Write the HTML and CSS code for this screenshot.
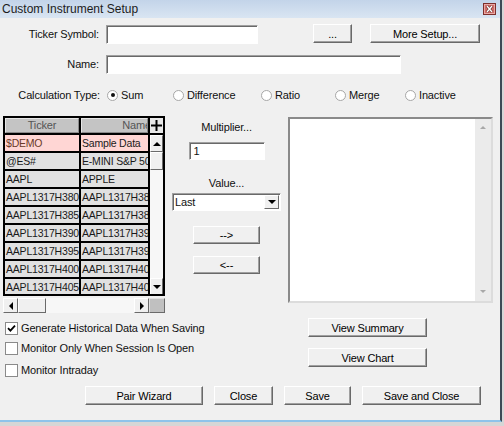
FILE: index.html
```html
<!DOCTYPE html>
<html lang="en">

<head>
    <meta charset="utf-8">
    <title>Custom Instrument Setup</title>
    <link rel="stylesheet" href="styles.css">
</head>

<body>
    <div class="dialog">
        <div class="titlebar">
            <span class="title">Custom Instrument Setup</span>
            <span class="close-x">
                <svg width="13" height="12" viewBox="0 0 13 12">
                    <rect x="0.5" y="0.5" width="12" height="11" fill="#cf6a66" stroke="#7d2f2c" />
                    <rect x="1.5" y="1.5" width="10" height="9" fill="none" stroke="#e9a9a5" />
                    <path d="M4 3 L9 9 M9 3 L4 9" stroke="#5a1e1c" stroke-width="2.6" />
                    <path d="M4 3 L9 9 M9 3 L4 9" stroke="#fff" stroke-width="1.4" />
                </svg>
            </span>
        </div>

        <div class="row row-ticker">
            <span class="lbl">Ticker Symbol:</span>
            <div class="field ticker-field"></div>
            <button class="btn btn-dots">...</button>
            <button class="btn btn-more">More Setup...</button>
        </div>

        <div class="row row-name">
            <span class="lbl">Name:</span>
            <div class="field name-field"></div>
        </div>

        <div class="row row-calc">
            <span class="lbl">Calculation Type:</span>
            <div class="radios">
                <span class="radio-item w-sum"><span class="radio on"></span>Sum</span>
                <span class="radio-item w-diff"><span class="radio"></span>Difference</span>
                <span class="radio-item w-ratio"><span class="radio"></span>Ratio</span>
                <span class="radio-item w-merge"><span class="radio"></span>Merge</span>
                <span class="radio-item"><span class="radio"></span>Inactive</span>
            </div>
        </div>

        <div class="main">
            <div class="leftcol">
                <div class="grid">
                    <div class="hcell">Ticker</div>
                    <div class="hcell hname"><span>Name</span></div>
                    <div class="hplus">
                        <svg width="11" height="11" viewBox="0 0 11 11">
                            <path d="M5.5 0 V11 M0 5.5 H11" stroke="#000" stroke-width="2" />
                        </svg>
                    </div>

                    <div class="vscroll">
                        <div class="sb-btn"><span class="tri tri-up"></span></div>
                        <div class="sb-thumb"></div>
                        <div class="sb-track"></div>
                        <div class="sb-btn"><span class="tri tri-down"></span></div>
                    </div>

                    <div class="cell demo demo-tick">$DEMO</div>
                    <div class="cell demo">Sample Data</div>
                    <div class="cell">@ES#</div>
                    <div class="cell">E-MINI S&amp;P 500</div>
                    <div class="cell">AAPL</div>
                    <div class="cell">APPLE</div>
                    <div class="cell">AAPL1317H380</div>
                    <div class="cell">AAPL1317H380</div>
                    <div class="cell">AAPL1317H385</div>
                    <div class="cell">AAPL1317H385</div>
                    <div class="cell">AAPL1317H390</div>
                    <div class="cell">AAPL1317H390</div>
                    <div class="cell">AAPL1317H395</div>
                    <div class="cell">AAPL1317H395</div>
                    <div class="cell">AAPL1317H400</div>
                    <div class="cell">AAPL1317H400</div>
                    <div class="cell">AAPL1317H405</div>
                    <div class="cell">AAPL1317H405</div>
                </div>

                <div class="hscroll">
                    <div class="sb-btn hbtn"><span class="tri tri-left"></span></div>
                    <div class="sb-thumb hthumb"></div>
                    <div class="sb-track"></div>
                    <div class="sb-btn hbtn"><span class="tri tri-right"></span></div>
                    <div class="corner"></div>
                </div>
            </div>

            <div class="midcol">
                <span class="mid-lbl lbl-mult">Multiplier...</span>
                <div class="field mult-field">1</div>
                <span class="mid-lbl lbl-value">Value...</span>
                <div class="field select">
                    <span class="select-text">Last</span>
                    <span class="select-btn"><span class="tri tri-down"></span></span>
                </div>
                <button class="btn btn-arrow btn-add">--&gt;</button>
                <button class="btn btn-arrow btn-remove">&lt;--</button>
            </div>

            <div class="field listbox">
                <div class="list-sb">
                    <span class="tri tri-up faint"></span>
                    <span class="tri tri-down faint"></span>
                </div>
            </div>
        </div>

        <div class="lower">
            <div class="checks">
                <label class="check-row first"><span class="chk">
                        <svg width="9" height="9" viewBox="0 0 9 9">
                            <path d="M1 4.2 L3.4 6.6 L8 1.6" fill="none" stroke="#000" stroke-width="1.8" />
                        </svg>
                    </span>Generate Historical Data When Saving</label>
                <label class="check-row second"><span class="chk"></span>Monitor Only When Session Is Open</label>
                <label class="check-row third"><span class="chk"></span>Monitor Intraday</label>
            </div>
            <div class="views">
                <button class="btn btn-view">View Summary</button>
                <button class="btn btn-view">View Chart</button>
            </div>
        </div>

        <div class="bottom">
            <button class="btn btn-wizard">Pair Wizard</button>
            <button class="btn btn-close">Close</button>
            <button class="btn btn-save">Save</button>
            <button class="btn btn-saveclose">Save and Close</button>
        </div>
    </div>
</body>

</html>
```

FILE: styles.css
```css
* {
    box-sizing: border-box;
}

body {
    margin: 0;
    background: #d6d6d6;
    font-family: "Liberation Sans", Arial, sans-serif;
    font-size: 11px;
    letter-spacing: -0.15px;
    color: #111;
}

.dialog {
    width: 502px;
    height: 422px;
    background: #f0f0f0;
    border-right: 2px solid #3b4a55;
    border-bottom: 2px solid #8ec3ea;
    overflow: hidden;
}

/* title bar */
.titlebar {
    height: 18px;
    display: flex;
    align-items: center;
    justify-content: space-between;
    background: linear-gradient(#c3d4e9, #d9e5f2);
    padding-left: 2px;
    padding-right: 4px;
}

.title {
    font-size: 12px;
    letter-spacing: 0;
    color: #1c1c1c;
}

.close-x {
    display: flex;
}

/* generic controls */
.btn {
    font-family: "Liberation Sans", Arial, sans-serif;
    font-size: 11px;
    letter-spacing: -0.15px;
    color: #000;
    background: #f0f0f0;
    border: 1px solid;
    border-color: #fff #696969 #696969 #fff;
    box-shadow: inset -1px -1px #a0a0a0;
    padding: 0;
    flex: none;
}

.field {
    background: #fff;
    border: 1px solid;
    border-color: #a0a0a0 #fff #fff #a0a0a0;
    box-shadow: inset 1px 1px #696969;
    flex: none;
}

.row {
    display: flex;
    align-items: flex-start;
}

.lbl {
    width: 99px;
    flex: none;
    text-align: right;
}

.row-ticker {
    margin-top: 6px;
    height: 20px;
}

.row-ticker .lbl {
    line-height: 20px;
}

.ticker-field {
    margin-left: 7px;
    margin-top: 1px;
    width: 152px;
    height: 19px;
}

.btn-dots {
    margin-left: 55px;
    width: 39px;
    height: 19px;
}

.btn-more {
    margin-left: 18px;
    width: 110px;
    height: 19px;
}

.row-name {
    margin-top: 11px;
    height: 19px;
}

.row-name .lbl {
    line-height: 19px;
}

.name-field {
    margin-left: 7px;
    width: 295px;
    height: 19px;
}

.row-calc {
    margin-top: 14px;
    height: 14px;
    line-height: 14px;
}

.row-calc .lbl {
    width: 100px;
}

.radios {
    display: flex;
    margin-left: 7px;
}

.radio-item {
    display: flex;
    align-items: center;
}

.w-sum {
    width: 66px;
}

.w-diff {
    width: 88px;
}

.w-ratio {
    width: 74px;
}

.w-merge {
    width: 70px;
}

.radio {
    width: 11px;
    height: 11px;
    border-radius: 50%;
    border: 1px solid #a7a7a7;
    background: #fff;
    margin-right: 3px;
    display: flex;
    align-items: center;
    justify-content: center;
}

.radio.on::after {
    content: "";
    width: 4px;
    height: 4px;
    border-radius: 50%;
    background: #111;
}

/* main area */
.main {
    display: flex;
    margin-top: 14px;
}

.leftcol {
    margin-left: 3px;
    width: 162px;
    flex: none;
}

.grid {
    width: 162px;
    height: 180px;
    border: 2px solid #000;
    background: #000;
    display: grid;
    grid-template-columns: 74px 67px 13px;
    grid-template-rows: 15px repeat(9, 16px);
    gap: 2px;
    overflow: hidden;
}

.hcell {
    background: #c4c4c4;
    border: 1px solid;
    border-color: #e6e6e6 #8a8a8a #8a8a8a #e6e6e6;
    color: #555;
    line-height: 13px;
    text-align: center;
    overflow: hidden;
    white-space: nowrap;
}

.hname {
    display: flex;
    justify-content: flex-end;
}

.hname span {
    margin-right: -4px;
}

.hplus {
    background: #e8e8e8;
    display: flex;
    align-items: center;
    justify-content: center;
}

.cell {
    background: #e1e1e1;
    font-size: 10.5px;
    line-height: 16px;
    padding-left: 1px;
    white-space: nowrap;
    overflow: hidden;
    color: #1a1a1a;
    letter-spacing: -0.2px;
}

.demo {
    background: #ffd6d4;
}

.demo-tick {
    color: #6b3a2a;
}

.vscroll {
    grid-column: 3;
    grid-row: 2 / span 9;
    display: flex;
    flex-direction: column;
    background: #f7f7f7;
}

.sb-btn {
    height: 17px;
    flex: none;
    background: #f0f0f0;
    border: 1px solid;
    border-color: #fff #6a6a6a #6a6a6a #fff;
    display: flex;
    align-items: center;
    justify-content: center;
}

.sb-thumb {
    height: 18px;
    flex: none;
    background: #f0f0f0;
    border: 1px solid;
    border-color: #fff #6a6a6a #6a6a6a #fff;
}

.sb-track {
    flex: 1;
    background: #f7f7f7;
}

.tri {
    width: 0;
    height: 0;
    border: 4px solid transparent;
}

.tri-up {
    border-bottom-color: #000;
    border-top-width: 0;
}

.tri-down {
    border-top-color: #000;
    border-bottom-width: 0;
}

.tri-left {
    border-right-color: #000;
    border-left-width: 0;
}

.tri-right {
    border-left-color: #000;
    border-right-width: 0;
}

.hscroll {
    margin-top: 2px;
    height: 15px;
    display: flex;
    background: #f7f7f7;
}

.hbtn {
    width: 15px;
    height: 15px;
}

.hthumb {
    width: 28px;
    height: 15px;
}

.corner {
    width: 16px;
    flex: none;
    background: #c0c0c0;
    border: 1px solid;
    border-color: #e0e0e0 #6a6a6a #6a6a6a #e0e0e0;
}

/* middle column */
.midcol {
    width: 123px;
    flex: none;
    display: flex;
    flex-direction: column;
    align-items: center;
}

.mid-lbl {
    line-height: 14px;
}

.lbl-mult {
    margin-top: 4px;
}

.mult-field {
    margin-top: 8px;
    width: 76px;
    height: 18px;
    line-height: 16px;
    padding-left: 4px;
}

.lbl-value {
    margin-top: 16px;
}

.select {
    margin-top: 3px;
    width: 109px;
    height: 18px;
    display: flex;
    align-items: stretch;
}

.select-text {
    flex: 1;
    line-height: 16px;
    padding-left: 2px;
}

.select-btn {
    width: 15px;
    margin: 1px 1px 1px 0;
    background: #f0f0f0;
    border: 1px solid;
    border-color: #fff #6a6a6a #6a6a6a #fff;
    display: flex;
    align-items: center;
    justify-content: center;
}

.btn-arrow {
    width: 67px;
    height: 18px;
}

.btn-add {
    margin-top: 15px;
}

.btn-remove {
    margin-top: 12px;
}

.listbox {
    margin-top: 1px;
    width: 205px;
    height: 186px;
    border-width: 2px;
    border-color: #8a8a8a #dcdcdc #dcdcdc #8a8a8a;
    box-shadow: none;
    display: flex;
    justify-content: flex-end;
}

.list-sb {
    width: 16px;
    background: #ebebeb;
    display: flex;
    flex-direction: column;
    justify-content: space-between;
    align-items: center;
    padding: 7px 0 8px;
}

.tri.faint {
    border-width: 3px;
}

.tri-up.faint {
    border-bottom-color: #a8a8a8;
    border-top-width: 0;
}

.tri-down.faint {
    border-top-color: #a8a8a8;
    border-bottom-width: 0;
}

/* lower area */
.lower {
    display: flex;
    margin-top: 5px;
}

.checks {
    width: 308px;
    flex: none;
    padding-left: 5px;
    display: flex;
    flex-direction: column;
}

.check-row {
    display: flex;
    align-items: center;
    height: 14px;
}

.first {
    margin-top: 3px;
}

.second {
    margin-top: 6px;
}

.third {
    margin-top: 8px;
}

.chk {
    width: 13px;
    height: 13px;
    background: #fff;
    border: 1px solid #8a8a8a;
    margin-right: 3px;
    display: flex;
    align-items: center;
    justify-content: center;
}

.views {
    display: flex;
    flex-direction: column;
    gap: 11px;
}

.btn-view {
    width: 119px;
    height: 19px;
}

.bottom {
    display: flex;
    margin-top: 9px;
}

.bottom .btn {
    height: 19px;
}

.btn-wizard {
    margin-left: 85px;
    width: 118px;
}

.btn-close {
    margin-left: 11px;
    width: 59px;
}

.btn-save {
    margin-left: 11px;
    width: 67px;
}

.btn-saveclose {
    margin-left: 11px;
    width: 119px;
}
```
